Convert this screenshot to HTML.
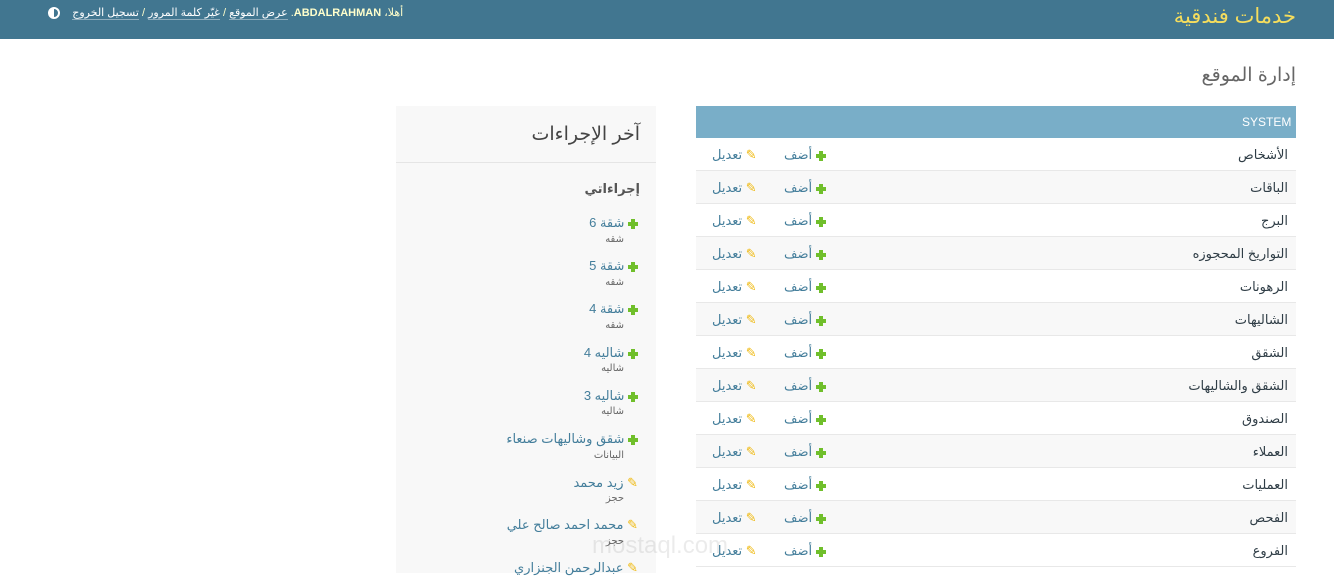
<!DOCTYPE html>
<html dir="rtl"><head><meta charset="utf-8">
<style>
*{margin:0;padding:0;box-sizing:border-box}
body{width:1334px;height:573px;overflow:hidden;background:#fff;font-family:"Liberation Sans","Noto Sans CJK SC","DejaVu Sans",sans-serif;color:#333;position:relative}
.a{position:absolute;white-space:nowrap}
#hdr{position:absolute;left:0;top:0;width:1334px;height:39px;background:#417690}
.title{right:38px;top:4px;font-size:21px;color:#f5dd5d}
.tools{left:48px;top:6px;font-size:11px;color:#ffc;direction:rtl}
.tools u{text-decoration:none;border-bottom:1px solid rgba(255,255,255,.4);color:#fff}
.plus{display:inline-block;width:10px;height:10px;position:relative;vertical-align:middle}
.plus:before{content:"";position:absolute;left:3px;top:0;width:4px;height:10px;background:#70bf2b}
.plus:after{content:"";position:absolute;left:0;top:3px;width:10px;height:4px;background:#70bf2b}
.pen{color:#efb80b;font-weight:bold}
.row{position:absolute;left:696px;width:600px;height:33px;border-bottom:1px solid #e8e8e8}
.row .n{position:absolute;right:8px;top:9px;font-size:13px;color:#2f3d46}
.row .ad{position:absolute;left:88px;top:9px;font-size:13px;color:#447e9b}
.row .ed{position:absolute;left:16px;top:9px;font-size:13px;color:#447e9b}
.side{position:absolute;left:396px;top:106px;width:260px;height:467px;background:#f8f8f8}
.it{position:absolute;right:696px;font-size:13px;color:#447e9b}
.sub{position:absolute;right:710px;font-size:10px;color:#666}
</style></head><body>
<div id="hdr"></div>
<div class="a title">خدمات فندقية</div>
<div class="a tools" style="left:48px">أهلا، <b style="color:#ffc">ABDALRAHMAN</b>. <u>عرض الموقع</u> / <u>غيّر كلمة المرور</u> / <u>تسجيل الخروج</u> &nbsp;&nbsp; <span style="display:inline-block;width:12px;height:12px;border-radius:50%;border:2px solid #fff;background:linear-gradient(to right,#fff 50%,transparent 50%);vertical-align:middle"></span></div>
<div class="a" style="right:38px;top:64px;font-size:19px;color:#666">إدارة الموقع</div>

<div class="a" style="left:696px;top:106px;width:600px;height:32px;background:#79aec8"></div>
<div class="a" style="left:1242px;top:115px;font-size:12px;color:#fff;direction:ltr">SYSTEM</div>

<div class="row" style="top:138px;background:#fff"><span class="n">الأشخاص</span><span class="ad"><i class="plus"></i> أضف</span><span class="ed"><span class="pen">✎</span> تعديل</span></div>
<div class="row" style="top:171px;background:#f8f8f8"><span class="n">الباقات</span><span class="ad"><i class="plus"></i> أضف</span><span class="ed"><span class="pen">✎</span> تعديل</span></div>
<div class="row" style="top:204px;background:#fff"><span class="n">البرج</span><span class="ad"><i class="plus"></i> أضف</span><span class="ed"><span class="pen">✎</span> تعديل</span></div>
<div class="row" style="top:237px;background:#f8f8f8"><span class="n">التواريخ المحجوزه</span><span class="ad"><i class="plus"></i> أضف</span><span class="ed"><span class="pen">✎</span> تعديل</span></div>
<div class="row" style="top:270px;background:#fff"><span class="n">الرهونات</span><span class="ad"><i class="plus"></i> أضف</span><span class="ed"><span class="pen">✎</span> تعديل</span></div>
<div class="row" style="top:303px;background:#f8f8f8"><span class="n">الشاليهات</span><span class="ad"><i class="plus"></i> أضف</span><span class="ed"><span class="pen">✎</span> تعديل</span></div>
<div class="row" style="top:336px;background:#fff"><span class="n">الشقق</span><span class="ad"><i class="plus"></i> أضف</span><span class="ed"><span class="pen">✎</span> تعديل</span></div>
<div class="row" style="top:369px;background:#f8f8f8"><span class="n">الشقق والشاليهات</span><span class="ad"><i class="plus"></i> أضف</span><span class="ed"><span class="pen">✎</span> تعديل</span></div>
<div class="row" style="top:402px;background:#fff"><span class="n">الصندوق</span><span class="ad"><i class="plus"></i> أضف</span><span class="ed"><span class="pen">✎</span> تعديل</span></div>
<div class="row" style="top:435px;background:#f8f8f8"><span class="n">العملاء</span><span class="ad"><i class="plus"></i> أضف</span><span class="ed"><span class="pen">✎</span> تعديل</span></div>
<div class="row" style="top:468px;background:#fff"><span class="n">العمليات</span><span class="ad"><i class="plus"></i> أضف</span><span class="ed"><span class="pen">✎</span> تعديل</span></div>
<div class="row" style="top:501px;background:#f8f8f8"><span class="n">الفحص</span><span class="ad"><i class="plus"></i> أضف</span><span class="ed"><span class="pen">✎</span> تعديل</span></div>
<div class="row" style="top:534px;background:#fff"><span class="n">الفروع</span><span class="ad"><i class="plus"></i> أضف</span><span class="ed"><span class="pen">✎</span> تعديل</span></div>

<div class="side"></div>
<div class="a" style="right:694px;top:123px;font-size:19px;color:#444">آخر الإجراءات</div>
<div class="a" style="left:396px;top:162px;width:260px;height:1px;background:#e5e5e5"></div>
<div class="a" style="right:694px;top:181px;font-size:13px;font-weight:bold;color:#555">إجراءاتي</div>

<div class="a it" style="top:215px"><i class="plus"></i> شقة 6</div><div class="a sub" style="top:234px">شقه</div>
<div class="a it" style="top:258px"><i class="plus"></i> شقة 5</div><div class="a sub" style="top:277px">شقه</div>
<div class="a it" style="top:301px"><i class="plus"></i> شقة 4</div><div class="a sub" style="top:320px">شقه</div>
<div class="a it" style="top:345px"><i class="plus"></i> شاليه 4</div><div class="a sub" style="top:363px">شاليه</div>
<div class="a it" style="top:388px"><i class="plus"></i> شاليه 3</div><div class="a sub" style="top:406px">شاليه</div>
<div class="a it" style="top:431px"><i class="plus"></i> شقق وشاليهات صنعاء</div><div class="a sub" style="top:450px">البيانات</div>
<div class="a it" style="top:475px"><span class="pen">✎</span> زيد محمد</div><div class="a sub" style="top:493px">حجز</div>
<div class="a it" style="top:517px"><span class="pen">✎</span> محمد احمد صالح علي</div><div class="a sub" style="top:536px">حجز</div>
<div class="a it" style="top:560px"><span class="pen">✎</span> عبدالرحمن الجنزاري</div>

<div class="a" style="left:592px;top:532px;font-size:24px;color:rgba(0,0,0,0.08);direction:ltr">mostaql.com</div>
</body></html>
